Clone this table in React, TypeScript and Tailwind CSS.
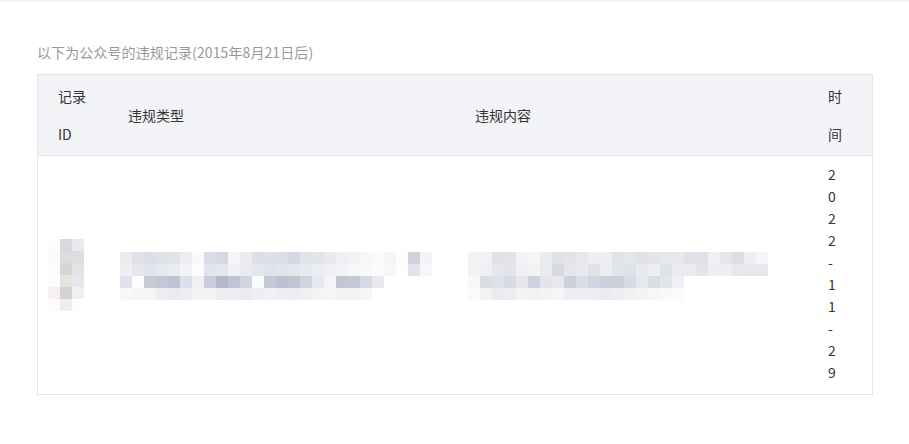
import React from "react";

const C1: string[][] = [
  ["#fdfcfb", "#d8d9dc", "#e8eaeb"],
  ["#fbfaf9", "#dcdcde", "#dcdfe2"],
  ["#fdfcfb", "#d6d6d7", "#e0e4e6"],
  ["#fefdfc", "#e6e4e3", "#e4e8ec"],
  ["#f6f1f0", "#d3d3d3", "#eef0f5"],
  ["#fdfcfb", "#eeeeee", "#fefefe"],
];

const C2: string[][] = [
  ["#e9ebf0","#dfe1ea","#dcdfe8","#dfe1e9","#e2e4eb","#eceef2","#f8f9fb","#d9dce6","#d6d9e3","#f5f6f8","#eaecf0","#dcdfe8","#dde0e9","#dcdfe8","#d5d8e3","#e1e4eb","#e3e5ec","#e8eaee","#eef0f3","#f1f2f5","#f6f7f9","#fafafb","#f4f5f7","#fdfdfd","#cfd2dd","#f3f4f6"],
  ["#efeff3","#e6e7ed","#e3e5ec","#e6e8ee","#e9ebf0","#f3f4f6","#fcfcfc","#e3e5ec","#e6e7ed","#f0f1f4","#eaebef","#e4e6ec","#e0e3ea","#e3e5ec","#e5e7ed","#e9eaef","#eceef2","#eff0f3","#f2f3f5","#f6f7f8","#f9f9fa","#fbfbfc","#f7f7f9","#fefefe","#e2e4ea","#f6f7f8"],
  ["#dee2eb","#fdfdfd","#c7cbd8","#c3c7d6","#bec3d3","#dce0e9","#eff0f3","#c9cdd9","#b4bace","#c1c5d3","#d1d5df","#fbfbfb","#c5c9d7","#bcc2d2","#c0c5d4","#d0d4de","#e6e8ee","#f5f5f7","#c2c7d5","#c4c8d6","#d6d9e2","#e8eaef"],
  ["#f7f8f9","#f5f6f8","#f4f5f7","#eceef1","#eaebef","#edeef2","#f3f4f6","#f3f4f6","#ecedf1","#eceef1","#eaebef","#eeeff2","#f0f1f4","#eeeff2","#edeef1","#eff0f3","#f3f4f6","#f4f5f7","#f1f2f4","#f3f3f5","#f6f6f8"],
];

const C3: string[][] = [
  ["#f1f2f4","#f1f2f5","#dfe1e8","#e1e3e9","#f3f4f6","#f7f6f7","#eaecf0","#e1e2e9","#e2e4ea","#e8e9ee","#eeeff2","#eeeff1","#e1e3ea","#e4e6ec","#e0e2ea","#e3e5eb","#e6e8ed","#e7e8ed","#dfe2ea","#dfe0e8","#eff0f2","#e5e6eb","#dcdfe7","#eeeff3","#f6f6f8"],
  ["#f3f3f5","#eff0f2","#e6e7ec","#e4e5ea","#eff0f2","#f3f3f4","#eaebef","#d5d9e3","#e5e6eb","#e9eaee","#e3e1e5","#eceef1","#e3e5eb","#dfe1e8","#e9eaee","#eeeff2","#dfe2e8","#e9ebee","#ebecf0","#e3e5ea","#eeeff1","#eeeff1","#e8e9ed","#e7e8ec","#e6e8ec"],
  ["#f8f8f9","#dcdce4","#dde1e8","#d9dbe4","#e6e7ec","#cfd2dc","#e3e5ea","#e6e8ec","#cdcfdb","#dadde5","#d2d5df","#cbcfdb","#ccd0da","#d8dbe3","#e7e8ec","#dadde5","#e3e5ea","#eff0f3"],
  ["#fafafa","#f1f2f4","#eaebef","#ededf1","#f3f4f6","#f1f2f4","#f3f4f6","#f5f6f7","#eeeff2","#eeeff2","#edeef1","#ebecef","#edeef1","#f0f1f3","#f4f4f6","#f6f7f8","#f9f9fa","#fbfbfb"],
];

function Mosaic({ rows }: { rows: string[][] }) {
  const s = 12;
  const w = Math.max(...rows.map((r) => r.length)) * s;
  const h = rows.length * s;
  return (
    <svg width={w} height={h} shapeRendering="crispEdges" className="block blur-[0.6px]">
      {rows.map((r, y) =>
        r.map((c, x) => (
          <rect key={`${x}-${y}`} x={x * s} y={y * s} width={s} height={s} fill={c} />
        ))
      )}
    </svg>
  );
}

export default function App() {
  return (
    <div
      className="w-[909px] h-[444px] bg-white text-[14px] text-[#353535]"
      style={{ fontFamily: '"Noto Sans CJK SC", "Noto Sans", sans-serif' }}
    >
      <div className="h-[2px] bg-[#f4f4f4]" />
      <div className="px-[37px] pt-[40px]">
        <div className="leading-[20px] text-[#999999] tracking-[0.1px]">以下为公众号的违规记录(2015年8月21日后)</div>
        <div className="mt-[12px] w-[836px] border border-[#e4e6eb]">
          <div className="grid grid-cols-[70px_347px_353px_1fr] bg-[#f2f4f8] border-b border-[#e4e6eb] py-[2px]">
            <div className="pl-[20px] flex items-center">
              <div className="w-[30px] leading-[38px]">记录ID</div>
            </div>
            <div className="pl-[20px] flex items-center leading-[20px]">违规类型</div>
            <div className="pl-[20px] flex items-center leading-[20px]">违规内容</div>
            <div className="pl-[20px] flex items-center">
              <div className="w-[15px] leading-[38px]">时间</div>
            </div>
          </div>
          <div className="grid grid-cols-[70px_347px_353px_1fr]">
            <div className="pl-[10px] flex items-center">
              <Mosaic rows={C1} />
            </div>
            <div className="pl-[12px] flex items-center pt-[2px]">
              <Mosaic rows={C2} />
            </div>
            <div className="pl-[13px] flex items-center pt-[2px]">
              <Mosaic rows={C3} />
            </div>
            <div className="pl-[20px] pt-[7px] pb-[11px]">
              <div className="w-[9px] break-all leading-[22px]">2022-11-29</div>
            </div>
          </div>
        </div>
      </div>
    </div>
  );
}
